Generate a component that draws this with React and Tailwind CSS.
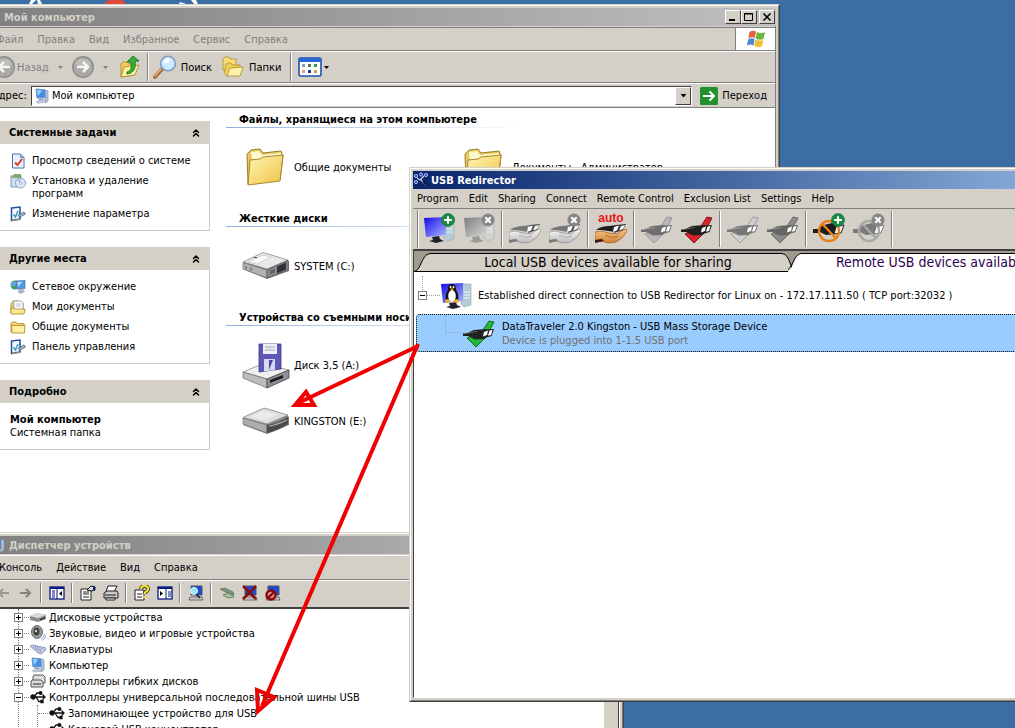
import React, { useState } from 'react';
import { ChevronsUp } from 'lucide-react';

const UI_FONT = 'font-["DejaVu_Sans_Condensed","Noto_Sans",sans-serif]';

/* ---------- small glyphs ---------- */

const Caret = ({ className = '' }) => (
  <svg viewBox="0 0 5 3" className={`w-[5px] h-[3px] shrink-0 ${className}`}>
    <path d="M0 0h5L2.5 3z" fill="currentColor" />
  </svg>
);

const NavCircle = ({ flip }) => (
  <svg viewBox="0 0 24 24" className="w-6 h-6 shrink-0">
    <circle cx="12" cy="12" r="11" fill="#8e8e8c" />
    <circle cx="12" cy="12" r="9.5" fill="#a9a9a6" />
    <path d="M4 9a9 9 0 0 1 16 0c-4 3-12 3-16 0z" fill="#bdbdba" />
    <path d={flip ? 'M18 12H7m5-5-5 5 5 5' : 'M6 12h11m-5-5 5 5-5 5'} fill="none" stroke="#f6f5f2" strokeWidth="2.6" />
  </svg>
);

const FolderShape = ({ className = 'w-4 h-4' }) => (
  <svg viewBox="0 0 16 16" className={`${className} shrink-0`}>
    <path d="M1 4.5 2 3h4l1.3 1.5H14V13H1z" fill="#f3d56b" stroke="#a8832a" strokeWidth=".8" />
    <path d="M1.500 6.500H15l-.5 7.500H2z" fill="#fdf0a0" stroke="#a8832a" strokeWidth=".8" />
  </svg>
);

const BigFolder = () => (
  <svg viewBox="0 0 48 48" className="w-12 h-12 shrink-0">
    <defs>
      <linearGradient id="bf" x1="0" y1="0" x2="1" y2="1">
        <stop offset="0" stopColor="#fff6b4" />
        <stop offset="1" stopColor="#efc246" />
      </linearGradient>
    </defs>
    <path d="M6 41 5 11l4-4 9-1 3 4 18-2 2 5-3 24z" fill="#e8c95c" stroke="#9c7b2c" />
    <path d="M9 9l8-1 3 4 19-2v3L10 17z" fill="#fff9cf" />
    <path d="M6 42 8 17l10-1 3-2 20-2-3 26z" fill="url(#bf)" stroke="#a9852e" />
  </svg>
);

const FolderUp = () => (
  <svg viewBox="0 0 24 24" className="w-6 h-6 shrink-0">
    <path d="M4 9l2-2h5l1 2h6v11L4 22z" fill="#f1cf57" stroke="#a8832a" strokeWidth=".8" />
    <path d="M4 22 7 12l15-2-4 10z" fill="#fdf09a" stroke="#a8832a" strokeWidth=".8" />
    <path d="M10 17c4-1 5-4 4-10h-4l6-6 6 5h-4c1 7-1 12-8 13z" fill="#36b336" stroke="#12711a" strokeWidth=".9" />
  </svg>
);

const SearchGlass = () => (
  <svg viewBox="0 0 24 24" className="w-6 h-6 shrink-0">
    <path d="M2 22 9 14" stroke="#a86a32" strokeWidth="4" strokeLinecap="round" />
    <path d="M2 21 8 14" stroke="#e6b583" strokeWidth="1.4" strokeLinecap="round" />
    <circle cx="15" cy="8.5" r="7.3" fill="#cfeaff" stroke="#7d9fc4" strokeWidth="1.6" />
    <path d="M10.500 8a5 5 0 0 1 7-4c-1 3-4 5-7 4z" fill="#fff" />
  </svg>
);

const FoldersIcon = () => (
  <svg viewBox="0 0 24 24" className="w-6 h-6 shrink-0">
    <path d="M2 4l2-2h4l1 2h6v10L2 15z" fill="#f7dc79" stroke="#b08a30" strokeWidth=".8" />
    <path d="M3 18 5 9l2-1h3l1 2h8v9L6 21z" fill="#f1cf57" stroke="#b08a30" strokeWidth=".8" />
    <path d="M6 21 9 13l13-1-3 9z" fill="#fdf3a8" stroke="#b08a30" strokeWidth=".8" />
  </svg>
);

const ViewsIcon = () => (
  <svg viewBox="0 0 24 20" className="w-6 h-5 shrink-0">
    <rect x="1" y="1" width="22" height="18" rx="1.500" fill="#fff" stroke="#1c4fb0" strokeWidth="1.600" />
    <rect x="1" y="1" width="22" height="4" fill="#2a67d2" />
    <rect x="4" y="7" width="3" height="3" fill="#8d9ab8" />
    <rect x="10" y="7" width="3" height="3" fill="#4d7a5d" />
    <rect x="16" y="7" width="3" height="3" fill="#3c9b3c" />
    <rect x="4" y="13" width="3" height="3" fill="#e49a76" />
    <rect x="10" y="13" width="3" height="3" fill="#123c98" />
    <rect x="16" y="13" width="3" height="3" fill="#c5a33a" />
  </svg>
);

const WindowsFlag = () => (
  <svg viewBox="0 0 20 18" className="w-5 h-[18px]">
    <path d="M3.500 2C6 .5 8 .6 10 1.700L8.800 8C7 7 5 7 2.400 8.300z" fill="#e8603a" />
    <path d="M10.800 2c2.400 1.300 5 1.300 8.200.2L17.500 9c-2.500 1-5.500.8-7.900-.6z" fill="#6db83c" />
    <path d="M2.200 9.200C4.500 8 6.600 8 8.600 9L7.400 15.500c-2-1.300-4.200-1.200-6.500-.1z" fill="#4a86da" />
    <path d="M9.400 9.400c2.600 1.300 5 1.400 7.900.6L16 16.500c-2.600 1-5.400.8-7.800-.7z" fill="#f5be33" />
  </svg>
);

const PcIcon = ({ className = 'w-4 h-4' }) => (
  <svg viewBox="0 0 16 16" className={`${className} shrink-0`}>
    <path d="M11 2l3 1v10l-3 2z" fill="#b9c4d6" stroke="#7685a0" strokeWidth=".6" />
    <path d="M2 1l9 .8v8L3 10z" fill="#3f8fee" stroke="#6d8fc0" strokeWidth=".9" />
    <path d="M3 2l5 .5L4 8z" fill="#9fd0ff" />
    <path d="M5 10.500h4l1 2H4z" fill="#8fa2bf" />
    <path d="M2 13.500l9-.8 1 1.500-8 1z" fill="#cfd8e6" stroke="#8793a8" strokeWidth=".5" />
  </svg>
);

const NetworkIcon = () => (
  <svg viewBox="0 0 16 16" className="w-4 h-4 shrink-0">
    <circle cx="5" cy="6" r="4.500" fill="#3f9e57" />
    <path d="M1 5c2-3 5-3 6-1S3 8 1 7z" fill="#64a8e8" />
    <path d="M6 2l9-.5v8L7 10z" fill="#4f97ea" stroke="#5877a8" strokeWidth=".8" />
    <path d="M7.500 3l5-.2L8 8z" fill="#b6dcff" />
    <path d="M9 10h4l2 3-5 2-2-2z" fill="#a8b6cc" />
  </svg>
);

const CheckDoc = () => (
  <svg viewBox="0 0 16 16" className="w-4 h-4 shrink-0">
    <path d="M2.500 1h8L14 4.500V15H2.500z" fill="#eaf1ff" stroke="#5570a8" />
    <path d="M10.500 1v3.500H14" fill="#9db5de" stroke="#5570a8" strokeWidth=".7" />
    <path d="M5 9.500 7.500 12 12 6" fill="none" stroke="#e03a20" strokeWidth="2" />
  </svg>
);

const InstallIcon = () => (
  <svg viewBox="0 0 16 16" className="w-4 h-4 shrink-0">
    <rect x="1" y="3" width="10" height="11" fill="#cfdcf0" stroke="#6f87b5" strokeWidth=".8" />
    <path d="M1 5l3-4h7v4z" fill="#7fae6a" />
    <circle cx="10.500" cy="10" r="5" fill="#dfe6f4" stroke="#7d8fb8" strokeWidth=".8" />
    <path d="M10.500 10 7 7a5 5 0 0 1 4-2z" fill="#a9c1ee" />
    <circle cx="10.500" cy="10" r="1.300" fill="#fff" stroke="#7d8fb8" strokeWidth=".6" />
  </svg>
);

const ControlIcon = () => (
  <svg viewBox="0 0 16 16" className="w-4 h-4 shrink-0">
    <path d="M1.500 2 10 1v12l-8.500 1.500z" fill="#f3f7ff" stroke="#24509c" strokeWidth="1.500" />
    <path d="M3.500 8.500 5.500 11 8 5" fill="none" stroke="#3a9cc4" strokeWidth="1.500" />
    <path d="M8 9.500 14 6l1.500 2L10 11z" fill="#a7b6c9" stroke="#3d4f6d" strokeWidth=".7" />
    <path d="M2 14.500l8-1" stroke="#c7a54a" />
  </svg>
);

const DocsFolder = () => (
  <svg viewBox="0 0 16 16" className="w-4 h-4 shrink-0">
    <path d="M1 5l2-3h5l5 2v10H1z" fill="#f2d269" stroke="#a8832a" strokeWidth=".8" />
    <path d="M4 2h7l2 2v7H4z" fill="#fff" stroke="#8296b8" strokeWidth=".8" />
    <path d="M6 5h5M6 7h5" stroke="#9db0cf" strokeWidth=".8" />
    <path d="M1 9h3l1 1h10l-1 5H1z" fill="#fbe78c" stroke="#a8832a" strokeWidth=".8" />
  </svg>
);

/* ---------- drives ---------- */

const HardDrive = () => (
  <svg viewBox="0 0 48 48" className="w-12 h-12 shrink-0">
    <path d="M1 21 21 11l26 8v10L25 37 1 27z" fill="#777" />
    <path d="M1 20 21 10.500 46 18 25 27z" fill="#e9e9e9" stroke="#8b8b8b" strokeWidth=".8" />
    <path d="M6 20 21 13l8 2-14 7z" fill="#f9f9f9" stroke="#bcbcbc" strokeWidth=".6" />
    <path d="M1 20.500 25 28v8L1 27z" fill="#b2b2b2" stroke="#6b6b6b" strokeWidth=".7" />
    <path d="M25 28l21-9.500V28L25 36z" fill="#8c8c8c" stroke="#555" strokeWidth=".7" />
    <path d="M35 24.500l9-4v7l-9 4z" fill="#2f3238" />
    <path d="M28 28.500l5-2v4l-5 2z" fill="#60646c" />
    <path d="M12 15.500h3M4 24v3M9 25.500v3" stroke="#555" />
  </svg>
);

const FloppyDrive = () => (
  <svg viewBox="0 0 48 48" className="w-12 h-12 shrink-0">
    <path d="M1 31 20 23l27 6-22 9z" fill="#f0f0f0" stroke="#888" strokeWidth=".8" />
    <path d="M1 31 25 38v9L1 37z" fill="#bcbcbc" stroke="#6b6b6b" strokeWidth=".7" />
    <path d="M25 38l22-9v8L25 47z" fill="#8f8f98" stroke="#444" strokeWidth=".8" />
    <path d="M28 39l13-5v3l-13 5z" fill="#1c1c22" />
    <path d="M17 3h22v25l-22 3z" fill="#5d58b8" stroke="#3b3788" strokeWidth=".8" />
    <path d="M21 3h14v10H21z" fill="#eceef8" />
    <path d="M23 6h10M23 9h10" stroke="#a3a6b8" />
    <path d="M22 18h11v11l-11 1.500z" fill="#d6d9ee" />
    <path d="M27 19h4l-4 10z" fill="#4a46a0" />
  </svg>
);

const RemovableDrive = () => (
  <svg viewBox="0 0 48 48" className="w-12 h-12 shrink-0">
    <path d="M1 21 22 11l23 7 2 2v8L25 37 1 28z" fill="#8a8a8a" />
    <path d="M1 20.500 22 11l24 7-21 9z" fill="#dedede" stroke="#8b8b8b" strokeWidth=".8" />
    <path d="M8 20 22 13.500 36 17.500 22 23z" fill="#ebebeb" />
    <path d="M1 21 25 28v8L1 27z" fill="#adadad" stroke="#777" strokeWidth=".7" />
    <path d="M25 28c8-1 15-4 21-8v7c-6 4-13 7-21 9z" fill="#4a4a4a" stroke="#555" strokeWidth=".7" />
    <path d="M27 29c7-1 12-3 18-6" stroke="#b5b5b5" strokeWidth="1.200" fill="none" />
  </svg>
);

/* ---------- USB Redirector toolbar drawings ---------- */

const Badge = ({ kind }) =>
  kind === 'plus' ? (
    <g>
      <circle cx="25" cy="7" r="6.500" fill="#1b8a45" stroke="#0e6a30" strokeWidth=".6" />
      <path d="M25 3.200v7.600M21.200 7h7.600" stroke="#fff" strokeWidth="2" />
    </g>
  ) : (
    <g>
      <circle cx="25" cy="7" r="6.500" fill="#868686" />
      <path d="m22.300 4.300 5.400 5.400M27.700 4.300l-5.400 5.400" stroke="#fff" strokeWidth="2" />
    </g>
  );

const Monitor = ({ gray, badge, tux }) => (
  <svg viewBox="0 0 32 32" className="w-8 h-8 shrink-0">
    <defs>
      <linearGradient id="scr" x1="0" y1="0" x2="1" y2="1">
        <stop offset="0" stopColor="#1208e8" />
        <stop offset="1" stopColor="#a9b6ff" />
      </linearGradient>
      <linearGradient id="scrGray" x1="0" y1="0" x2="1" y2="1">
        <stop offset="0" stopColor="#7c7c7c" />
        <stop offset="1" stopColor="#d6d6d6" />
      </linearGradient>
    </defs>
    <path d="M21 5h10v21l-7 2-3-3z" fill={gray ? '#d0d0d0' : '#b5cbd6'} stroke={gray ? '#b0b0b0' : '#90a8b2'} strokeWidth=".6" />
    <path d="M24 16h6M24 19h6M24 13h6" stroke={gray ? '#eee' : '#e6f5f8'} />
    <path d="M1 5l22-1v18L3 24z" fill={gray ? 'url(#scrGray)' : 'url(#scr)'} />
    <path d="M9 24l7-1 1 3 4 2-8 2-7-2 4-1z" fill={gray ? '#9a9a9a' : '#20242a'} />
    {tux && (
      <g>
        <path d="M12 5c4 0 4 4 4 6 2 3 3 6 2 11H6c-1-5 0-8 2-11 0-3 0-6 4-6z" fill="#111" />
        <ellipse cx="12" cy="17" rx="3.800" ry="6" fill="#fff" />
        <circle cx="10.500" cy="8" r="1" fill="#fff" />
        <circle cx="13.500" cy="8" r="1" fill="#fff" />
        <path d="M10 9.500h4l-2 2.500z" fill="#f0a818" />
        <path d="M5 21l3-1 3 3-5 1zM19 21l-3-1-3 3 5 1z" fill="#f2b01e" />
      </g>
    )}
    {badge && <Badge kind={badge} />}
  </svg>
);

const Hand = ({ warm, auto, badge }) => (
  <svg viewBox="0 0 32 32" className="w-8 h-8 shrink-0">
    <defs>
      <linearGradient id="skin" x1="0" y1="0" x2="0" y2="1">
        <stop offset="0" stopColor="#fbc888" />
        <stop offset="1" stopColor="#d07f35" />
      </linearGradient>
      <linearGradient id="skinGray" x1="0" y1="0" x2="0" y2="1">
        <stop offset="0" stopColor="#fafafa" />
        <stop offset="1" stopColor="#b8b8b8" />
      </linearGradient>
    </defs>
    <path d="M0 19l7-1 6 2 9 1 4-3 5-2 1 2-5 7-6 4-8 1-6-2-7 1z" fill={warm ? 'url(#skin)' : 'url(#skinGray)'} stroke={warm ? '#98561c' : '#8c8c8c'} strokeWidth=".7" />
    <path d="M0 27l7-1 2 2-9 2z" fill={warm ? '#3a1c08' : '#777'} />
    <path d="M10 22l7 2.500 6-1.500" stroke={warm ? '#a85e20' : '#a0a0a0'} fill="none" strokeWidth=".8" />
    <path d="M1 17c4-3 8-4 13-4l8-1-2 7-7-1-6-1z" fill={warm ? '#1d1d1d' : '#777'} />
    <path d="M21 12l10-1-3 6-9 3z" fill={warm ? '#303030' : '#4c4c4c'} />
    <path d="M19 14l5-1.500-2 5-4 1.500z" fill="#fff" />
    <path d="M26 13l4-1-2 4-4 1.500z" fill="#fff" />
    {auto && (
      <text x="16" y="9" textAnchor="middle" fontSize="12" fontWeight="bold" fill="#e81414" fontFamily="Liberation Sans, sans-serif">auto</text>
    )}
    {badge && <Badge kind={badge} />}
  </svg>
);

const PlugCheck = ({ check, edge, plug }) => (
  <svg viewBox="0 0 32 32" className="w-8 h-8 shrink-0">
    <path d="M4 21l5-2 5 3L26 4l5 1-8 15-10 10z" fill={check} stroke={edge} />
    <path d="M0 16.500h3l8-3.500 12-1 3 2-4 8-10 .5-7-3.500H0z" fill={plug} />
    <path d="M22 12.500l9-.5-2.500 7-8 2.500z" fill={plug} />
    <path d="M21 15l4-1.500-1 4.500-4 1.500z" fill="#fff" />
    <path d="M26.500 13.500l3-.5-1.500 5-3 .8z" fill="#fff" />
    <path d="M5 16l9-1.500" stroke="#fff" strokeOpacity=".3" />
  </svg>
);

const PlugBan = ({ gray, badge }) => (
  <svg viewBox="0 0 32 32" className="w-8 h-8 shrink-0">
    <path d="M0 16h6v4H0zM7 13l12-3 4 2v9l-10 1-6-3z" fill={gray ? '#7a7a7a' : '#1c1c1c'} />
    <path d="M23 14l8-2-3 8-7 1z" fill="#fff" stroke={gray ? '#777' : '#222'} />
    <circle cx="16" cy="18" r="10" fill="none" stroke={gray ? '#a8a8a8' : '#e8811a'} strokeWidth="2.400" />
    <path d="M9 10.500l14 15" stroke={gray ? '#a8a8a8' : '#e8811a'} strokeWidth="2.400" />
    <Badge kind={badge} />
  </svg>
);

/* ---------- shared window parts ---------- */

const WindowFrame = ({ className, children, label }) => (
  <section aria-label={label} className={`absolute flex flex-col bg-[#d4d0c8] border border-t-[#d4d0c8] border-l-[#d4d0c8] border-r-[#404040] border-b-[#404040] ${className}`}>
    <div className="flex flex-col flex-1 min-h-0 border border-t-white border-l-white border-r-[#808080] border-b-[#808080] p-[2px]">
      {children}
    </div>
  </section>
);

const MenuBar = ({ items, className = '' }) => (
  <nav className={`flex items-center ${className}`}>
    {items.map((item) => (
      <button key={item} className="px-[7px] whitespace-nowrap">{item}</button>
    ))}
  </nav>
);

const Separator = ({ className = '' }) => (
  <div className={`shrink-0 w-[2px] border-l border-l-[#808080] border-r border-r-white ${className}`} />
);

const CaptionButton = ({ label, children }) => (
  <button aria-label={label} className="w-4 h-[14px] flex items-center justify-center bg-[#d4d0c8] border border-t-white border-l-white border-r-[#404040] border-b-[#404040]">
    <svg viewBox="0 0 12 10" className="w-3 h-[10px]" fill="none" stroke="#000">{children}</svg>
  </button>
);

/* ---------- Explorer ---------- */

const TaskPanel = ({ title, children }) => (
  <section>
    <button className="w-full h-[23px] pl-[17px] pr-2 flex items-center justify-between bg-[#d4d0c8] font-bold">
      {title}
      <ChevronsUp className="w-3 h-3" strokeWidth={3} />
    </button>
    <div className="border border-t-0 border-[#cdcac3] pt-[10px] pb-[10px] pl-[17px] pr-3">{children}</div>
  </section>
);

const TaskLinks = ({ items }) => (
  <ul className="space-y-[7px]">
    {items.map(({ name, icon }) => (
      <li key={name}>
        <a href="#" className="flex items-start gap-[6px]">
          <span className="h-[13px] flex items-center">{icon}</span>
          <span className="min-w-0 grow">{name}</span>
        </a>
      </li>
    ))}
  </ul>
);

const systemTasks = [
  { name: 'Просмотр сведений о системе', icon: <CheckDoc /> },
  { name: 'Установка и удаление программ', icon: <InstallIcon /> },
  { name: 'Изменение параметра', icon: <ControlIcon /> },
];

const otherPlaces = [
  { name: 'Сетевое окружение', icon: <NetworkIcon /> },
  { name: 'Мои документы', icon: <DocsFolder /> },
  { name: 'Общие документы', icon: <FolderShape /> },
  { name: 'Панель управления', icon: <ControlIcon /> },
];

const fileGroups = [
  {
    title: 'Файлы, хранящиеся на этом компьютере',
    items: [
      { name: 'Общие документы', icon: <BigFolder /> },
      { name: 'Документы - Администратор', icon: <BigFolder /> },
    ],
  },
  { title: 'Жесткие диски', items: [{ name: 'SYSTEM (C:)', icon: <HardDrive /> }] },
  {
    title: 'Устройства со съемными носителями',
    stacked: true,
    items: [
      { name: 'Диск 3,5 (A:)', icon: <FloppyDrive /> },
      { name: 'KINGSTON (E:)', icon: <RemovableDrive /> },
    ],
  },
];

const ExplorerWindow = () => {
  const [address, setAddress] = useState('Мой компьютер');

  return (
    <WindowFrame label="Мой компьютер" className="top-1 -left-3 w-[792px] h-[540px]">
      <header className="h-[18px] shrink-0 flex items-center pl-3 pr-px bg-linear-to-r from-[#808080] to-[#c0c0c0] text-[#d4d0c8] font-bold">
        <span className="grow">Мой компьютер</span>
        <CaptionButton label="Свернуть"><path d="M2 8h6" strokeWidth="2" /></CaptionButton>
        <CaptionButton label="Развернуть"><path d="M1.500 1.500h8v7h-8zM1 2h9" /></CaptionButton>
        <span className="w-[2px]" />
        <CaptionButton label="Закрыть"><path d="M2.500 1.500l7 7M9.500 1.500l-7 7" strokeWidth="1.600" /></CaptionButton>
      </header>

      <div className="grow min-h-0 flex flex-col border-r border-r-[#808080]">
        <div className="mt-px h-6 shrink-0 flex border-t border-t-[#808080] border-b border-b-[#808080]">
          <MenuBar items={['Файл', 'Правка', 'Вид', 'Избранное', 'Сервис', 'Справка']} className="grow -ml-[3px] text-[#808080]" />
          <div className="w-10 flex items-center justify-center bg-white border-l border-l-[#808080]">
            <WindowsFlag />
          </div>
        </div>

        {/* Standard buttons */}
        <div className="h-8 shrink-0 flex items-center border-t border-t-white border-b border-b-[#808080]">
          <button className="flex items-center text-[#808080]"><NavCircle flip /><span className="ml-px">Назад</span></button>
          <Caret className="ml-[9px] text-[#808080]" />
          <button aria-label="Вперед" className="ml-2"><NavCircle /></button>
          <Caret className="ml-2 text-[#808080]" />
          <button aria-label="Вверх" className="ml-[9px]"><FolderUp /></button>
          <Separator className="h-7 ml-[6px]" />
          <button className="ml-1 flex items-center gap-1"><SearchGlass />Поиск</button>
          <button className="ml-[9px] flex items-center gap-1"><FoldersIcon />Папки</button>
          <Separator className="h-7 ml-[9px]" />
          <button aria-label="Вид" className="ml-[6px] flex items-center gap-[2px]"><ViewsIcon /><Caret /></button>
        </div>

        {/* Address bar */}
        <div className="h-6 shrink-0 flex items-center gap-1 border-t border-t-white">
          <label htmlFor="address" className="w-8 text-right">Адрес:</label>
          <div className="ml-[3px] h-5 grow flex items-center bg-white border border-t-[#404040] border-l-[#404040] border-r-white border-b-white pl-[2px]">
            <PcIcon />
            <input id="address" value={address} onChange={(e) => setAddress(e.target.value)} className="grow min-w-0 px-[2px] outline-none" />
            <button aria-label="Список адресов" className="w-4 h-[18px] flex items-center justify-center bg-[#d4d0c8] border border-t-white border-l-white border-r-[#404040] border-b-[#404040]">
              <Caret className="scale-125" />
            </button>
          </div>
          <button className="ml-1 pr-2 flex items-center gap-1">
            <svg viewBox="0 0 18 18" className="w-[18px] h-[18px]">
              <rect width="18" height="18" rx="1.500" fill="#22902c" />
              <path d="M3 9h11M9.500 4.500 14 9l-4.500 4.500" fill="none" stroke="#fff" strokeWidth="2" />
            </svg>
            Переход
          </button>
        </div>

        <div className="grow flex bg-white border-t border-t-[#808080] overflow-hidden">
          <aside className="w-[218px] shrink-0 pt-[13px] space-y-4">
            <TaskPanel title="Системные задачи"><TaskLinks items={systemTasks} /></TaskPanel>
            <TaskPanel title="Другие места"><TaskLinks items={otherPlaces} /></TaskPanel>
            <TaskPanel title="Подробно">
              <p className="font-bold">Мой компьютер</p>
              <p>Системная папка</p>
            </TaskPanel>
          </aside>

          <main className="ml-4 pt-[5px] grow">
            {fileGroups.map((group) => (
              <section key={group.title} className="pb-[21px]">
                <h2 className="h-[15px] pl-[13px] font-bold whitespace-nowrap">{group.title}</h2>
                <div className="-mt-px h-px w-[300px] bg-linear-to-r from-[#8fb0dc] to-white" />
                <div className={group.stacked ? 'pt-[15px] pl-4 flex flex-col gap-2' : 'pt-[15px] pl-4 flex'}>
                  {group.items.map((item) => (
                    <button key={item.name} className="w-[218px] shrink-0 flex items-center gap-1 whitespace-nowrap">
                      {item.icon}
                      {item.name}
                    </button>
                  ))}
                </div>
              </section>
            ))}
          </main>
        </div>
      </div>
    </WindowFrame>
  );
};

/* ---------- Device manager ---------- */

const UsbTrident = () => (
  <svg viewBox="0 0 16 16" className="w-4 h-4 shrink-0" fill="none" stroke="#111" strokeWidth="1.300">
    <path d="M1 8h14M12.500 5.500 15 8l-2.500 2.500M4 8l3-4h3M6 8l3 4.500h3" />
    <circle cx="3" cy="8" r="2" fill="#111" />
    <circle cx="10.500" cy="4" r="1.300" fill="#111" />
    <path d="M11 11.500h2v2h-2z" fill="#111" />
  </svg>
);

const DiskSmall = () => (
  <svg viewBox="0 0 16 16" className="w-4 h-4 shrink-0">
    <path d="M0 7l7-3 9 2v4l-8 3-8-2z" fill="#8b8b8b" />
    <path d="M0 7l7-3 9 2-8 3z" fill="#dcdcdc" />
    <path d="M10 10l5-2v1.500l-5 2z" fill="#333" />
  </svg>
);

const SpeakerSmall = () => (
  <svg viewBox="0 0 16 16" className="w-4 h-4 shrink-0">
    <ellipse cx="7" cy="7" rx="5.500" ry="6.500" fill="#9a9a9a" stroke="#555" strokeWidth=".8" />
    <ellipse cx="6.500" cy="6.500" rx="3" ry="4" fill="#3f3f3f" />
    <circle cx="6" cy="6" r="1.200" fill="#d5d5d5" />
    <path d="M11 14c2-1 3.500-3 3.500-5M12 15.500c2-1 3.500-3 3.500-5" stroke="#6f8fd8" strokeWidth=".8" fill="none" />
  </svg>
);

const KeyboardSmall = () => (
  <svg viewBox="0 0 16 16" className="w-4 h-4 shrink-0">
    <path d="M0 5l3-1 13 3v2l-5 4-3-1z" fill="#c9cfe8" stroke="#7d86b0" strokeWidth=".8" />
    <path d="M3 6l9 4M5 5.500l9 3M5 8l6 3" stroke="#7580b8" strokeDasharray="1 1" />
  </svg>
);

const FloppyCtl = () => (
  <svg viewBox="0 0 16 16" className="w-4 h-4 shrink-0" fill="#dcdcdc" stroke="#444" strokeWidth=".9">
    <path d="M4 2h9l2 2v6H3V4z" />
    <path d="M2 7h9l2 2v5H1V9z" />
    <path d="M3 11h8" stroke="#111" />
  </svg>
);

const deviceTree = [
  { name: 'Дисковые устройства', icon: <DiskSmall /> },
  { name: 'Звуковые, видео и игровые устройства', icon: <SpeakerSmall /> },
  { name: 'Клавиатуры', icon: <KeyboardSmall /> },
  { name: 'Компьютер', icon: <PcIcon /> },
  { name: 'Контроллеры гибких дисков', icon: <FloppyCtl /> },
  {
    name: 'Контроллеры универсальной последовательной шины USB',
    icon: <UsbTrident />,
    children: ['Запоминающее устройство для USB', 'Корневой USB концентратор'],
  },
];

const Expander = ({ open }) => (
  <button aria-label={open ? 'Свернуть ветвь' : 'Развернуть ветвь'} className="relative shrink-0 bg-white">
    <svg viewBox="0 0 9 9" className="w-[9px] h-[9px]" fill="none" shapeRendering="crispEdges">
      <rect x=".5" y=".5" width="8" height="8" stroke="#808080" />
      <path d={open ? 'M2 4.500h5' : 'M2 4.500h5M4.500 2v5'} stroke="#000" />
    </svg>
  </button>
);

const ToolGlyph = ({ children }) => (
  <svg viewBox="0 0 16 16" className="w-4 h-4" fill="none">{children}</svg>
);

const paneGlyph = (
  <>
    <rect x="1" y="2" width="14" height="12" fill="#fff" stroke="#0a1a80" strokeWidth="1.300" />
    <path d="M1 3h14" stroke="#0a1a80" strokeWidth="2" />
  </>
);

const monitorGlyph = (
  <>
    <path d="M3 1h11v9H3z" fill="#1a48d8" stroke="#555" />
    <path d="M2 12h12l1 3H1z" fill="#c8c8c8" stroke="#555" strokeWidth=".8" />
  </>
);

const dmTools = [
  [
    { label: 'Назад', art: <path d="M14 8H4m4-4L4 8l4 4" stroke="#9a9790" strokeWidth="2" /> },
    { label: 'Вперед', art: <path d="M2 8h10M8 4l4 4-4 4" stroke="#85827c" strokeWidth="2" /> },
  ],
  [{ label: 'Дерево консоли', art: <>{paneGlyph}<path d="M3 6h3M3 8h3M3 10h3M3 12h3" stroke="#0a1a80" /><path d="M8 3v11" stroke="#0a1a80" /><path d="M13 6v5l-3-2.500z" fill="#000" /></> }],
  [
    { label: 'Свойства', art: <><path d="M1 4h10v11H1z" fill="#fff" stroke="#222" /><path d="M3 7h6M3 9h6M3 12h6" stroke="#222" /><path d="M7 5l4-4 4 1v3l-4 1z" fill="#ddd" stroke="#111" /><path d="M14 1v4" stroke="#0a1a80" strokeWidth="2" /></> },
    { label: 'Печать', art: <><path d="M5 1h9l-3 6H3z" fill="#fff" stroke="#222" /><path d="M1 8l3-2h10l1 2v5H1z" fill="#c9c9c9" stroke="#222" /><path d="M2 10h11M3 13h9v2H3z" stroke="#222" fill="#fff" /></> },
  ],
  [
    { label: 'Справка', art: <><path d="M1 5h9v10H1z" fill="#fff" stroke="#222" /><path d="M3 9h5M3 12h5" stroke="#222" /><path d="M7 4c0-4 7-4 7 0 0 3-3.500 2-3.500 5" stroke="#222" strokeWidth="3.800" /><path d="M7 4c0-4 7-4 7 0 0 3-3.500 2-3.500 5M10.500 11v2" stroke="#f4e72a" strokeWidth="2.200" /></> },
    { label: 'Панель действий', art: <>{paneGlyph}<path d="M9 3v11" stroke="#0a1a80" /><path d="M11 7h3M11 9h3M11 11h3" stroke="#0a1a80" /><path d="M3 6v5l3-2.500z" fill="#000" /></> },
  ],
  [{ label: 'Обновить конфигурацию', art: <>{monitorGlyph}<circle cx="6" cy="6" r="3.500" fill="#9fe4f4" stroke="#dff" /><path d="M8 9l4 4" stroke="#123" strokeWidth="1.600" /></> }],
  [
    { label: 'Обновить драйвер', art: <><path d="M1 4l5-1 8 4 1 3-5-1z" fill="#7c9a78" stroke="#4c6a48" strokeWidth=".7" /><path d="M4 10l6-2 5 4-6 1z" fill="#a8c49f" stroke="#4c6a48" strokeWidth=".7" /></> },
    { label: 'Удалить', art: <>{monitorGlyph}<path d="M1 1l13 13M14 1L1 14" stroke="#8a0a0a" strokeWidth="2.500" /></> },
    { label: 'Отключить', art: <>{monitorGlyph}<circle cx="6" cy="10" r="4.500" fill="#d89090" stroke="#8a0a0a" strokeWidth="2.400" /><path d="M3 13l6-6" stroke="#8a0a0a" strokeWidth="2.400" /></> },
  ],
];

const DeviceManagerWindow = () => (
  <WindowFrame label="Диспетчер устройств" className="top-[532px] -left-[14px] w-[638px] h-[260px]">
    <header className="h-[18px] shrink-0 flex items-center gap-[3px] bg-linear-to-r from-[#808080] to-[#c0c0c0] text-[#d4d0c8] font-bold">
      <PcIcon />
      Диспетчер устройств
    </header>
    <MenuBar items={['Консоль', 'Действие', 'Вид', 'Справка']} className="mt-px h-[25px] shrink-0 pl-[2px] border-t border-t-white border-b border-b-[#808080]" />
    <div className="h-[27px] shrink-0 pb-[3px] pl-px flex items-center border-t border-t-white">
      {dmTools.map((group, i) => (
        <React.Fragment key={i}>
          {i > 0 && <Separator className="h-5 mx-[3px]" />}
          {group.map((tool) => (
            <button key={tool.label} aria-label={tool.label} className="w-[23px] h-[22px] flex items-center justify-center">
              <ToolGlyph>{tool.art}</ToolGlyph>
            </button>
          ))}
        </React.Fragment>
      ))}
    </div>
    <div className="grow min-h-0 flex border border-t-2 border-t-[#404040] border-l-[#404040] border-r-white border-b-white bg-white">
      <ul className="relative grow pl-[23px] whitespace-nowrap overflow-hidden">
        <span className="absolute left-[27px] top-0 h-full border-l border-dotted border-[#808080]" />
        {deviceTree.map((node) => (
          <li key={node.name} className="relative">
            <div className="h-4 flex items-center">
              <Expander open={!!node.children} />
              <span className="w-[5px] mx-px border-t border-dotted border-[#808080]" />
              {node.icon}
              <span className="ml-[3px]">{node.name}</span>
            </div>
            {node.children && (
              <ul className="ml-[23px] border-l border-dotted border-[#808080]">
                {node.children.map((child) => (
                  <li key={child} className="h-4 flex items-center">
                    <span className="w-[10px] mr-px border-t border-dotted border-[#808080]" />
                    <UsbTrident />
                    <span className="ml-[3px]">{child}</span>
                  </li>
                ))}
              </ul>
            )}
          </li>
        ))}
      </ul>
      <div className="w-4 shrink-0 bg-[#d4d0c8] border border-t-white border-l-white border-r-[#404040] border-b-[#404040]" />
    </div>
  </WindowFrame>
);

/* ---------- USB Redirector ---------- */

const usbTools = [
  [
    { label: 'Connect to server', icon: <Monitor badge="plus" /> },
    { label: 'Disconnect', icon: <Monitor gray badge="x" /> },
  ],
  [
    { label: 'Share device', icon: <Hand /> },
    { label: 'Unshare device', icon: <Hand badge="x" /> },
  ],
  [{ label: 'Auto share', icon: <Hand warm auto /> }],
  [
    { label: 'Connect device', icon: <PlugCheck check="#b9b9b9" edge="#969696" plug="#6e6e6e" /> },
    { label: 'Disconnect device', icon: <PlugCheck check="#d8232c" edge="#8a1018" plug="#1f1f1f" /> },
  ],
  [
    { label: 'Auto-connect device', icon: <PlugCheck check="#cfcfcf" edge="#9c9c9c" plug="#777777" /> },
    { label: 'Auto-connect all', icon: <PlugCheck check="#8a8a8a" edge="#6e6e6e" plug="#666666" /> },
  ],
  [
    { label: 'Add exclusion', icon: <PlugBan badge="plus" /> },
    { label: 'Remove exclusion', icon: <PlugBan gray badge="x" /> },
  ],
];

const UsbRedirectorWindow = () => {
  const [tab, setTab] = useState('remote');

  return (
    <WindowFrame label="USB Redirector" className="top-[167px] left-[409px] -right-[154px] h-[535px]">
      <header className="h-[18px] shrink-0 flex items-center gap-[2px] bg-linear-to-r from-[#0a246a] to-[#a6caf0] text-white font-bold">
        <svg viewBox="0 0 16 16" className="w-4 h-4" fill="none">
          <g fill="#2c50c8" stroke="#a9bdf5">
            <circle cx="3" cy="4" r="1.600" /><circle cx="8" cy="2.500" r="1.600" /><circle cx="13" cy="3" r="1.600" />
            <circle cx="3" cy="10" r="1.600" />
          </g>
          <path d="M4 6l3 2 4-4M8 8l6 6" stroke="#c9d4f8" strokeWidth="1.200" />
          <path d="M10 9l4 5" stroke="#111" strokeWidth="1.500" />
        </svg>
        USB Redirector
      </header>
      <div className="h-[19px] shrink-0 flex">
        {['Program', 'Edit', 'Sharing', 'Connect', 'Remote Control', 'Exclusion List', 'Settings', 'Help'].map((item) => (
          <button key={item} className="pl-1 pr-[6px] whitespace-nowrap">{item}</button>
        ))}
      </div>

      <div className="h-[41px] shrink-0 flex items-center pl-1 border-t border-t-[#808080]">
        <Separator className="h-[38px]" />
        {usbTools.map((group, i) => (
          <React.Fragment key={i}>
            {group.map((tool) => (
              <button key={tool.label} aria-label={tool.label} className="w-10 h-9 flex items-center justify-center">{tool.icon}</button>
            ))}
            <Separator className="h-9 mx-[2px]" />
          </React.Fragment>
        ))}
      </div>

      <div className="grow min-h-0 flex flex-col bg-white border border-t-2 border-t-[#404040] border-l-[#404040] border-r-white border-b-white">
        <div role="tablist" className="shrink-0 h-[21px] pt-px flex bg-[#a09a8f] text-[14px]">
          <button role="tab" aria-selected={tab === 'local'} onClick={() => setTab('local')} className="relative w-[374px] h-5">
            <svg viewBox="0 0 384 20" className="absolute left-0 top-0 w-[384px] h-5">
              <path d="M0 19.500c7 0 7-17 16-18h352c9 1 7 17 15 18z" fill="#d4d0c8" stroke="#000" />
            </svg>
            <span className="relative pl-[14px]">Local USB devices available for sharing</span>
          </button>
          <button role="tab" aria-selected={tab === 'remote'} onClick={() => setTab('remote')} className="relative grow h-5 pl-12 text-left text-[#2a0050] whitespace-nowrap">
            <svg viewBox="0 0 400 20" preserveAspectRatio="xMinYMin slice" className="absolute left-0 top-0 w-full h-5">
              <path d="M0 19.500c6-3 6-17 13-18h387V21H0z" fill="#fff" />
              <path d="M-4 19.500c9-1 9-17 17-18h390" fill="none" stroke="#000" />
            </svg>
            <span className="relative">Remote USB devices available</span>
          </button>
        </div>

        <div className="flex flex-col pl-[2px]">
          <div className="h-[42px] pt-1 flex items-center pl-[2px] relative">
            <span className="absolute left-[6px] top-1 h-4 border-l border-dotted border-[#a0a0a0]" />
            <Expander open />
            <span className="w-[13px] border-t border-dotted border-[#a0a0a0]" />
            <Monitor tux />
            <span className="ml-[6px] whitespace-nowrap">Established direct connection to USB Redirector for Linux on - 172.17.111.50 ( TCP port:32032 )</span>
          </div>
          <div className="h-[38px] flex items-center pl-7 bg-[#99ccff] border border-dotted border-black rounded-sm">
            <span className="w-[18px] h-[18px] -mt-[18px] border-l border-b border-dotted border-[#8ea8c8]" />
            <PlugCheck check="#22b83a" edge="#0e6e20" plug="#222222" />
            <div className="ml-[7px] pt-px leading-[14px] whitespace-nowrap">
              <p>DataTraveler 2.0 Kingston - USB Mass Storage Device</p>
              <p className="text-[#707070]">Device is plugged into 1-1.5 USB port</p>
            </div>
          </div>
        </div>
      </div>
    </WindowFrame>
  );
};

const App = () => {
  return (
    <div className={`relative h-screen overflow-hidden bg-[#3a6ea5] text-black text-[11px] leading-[13px] ${UI_FONT}`}>
      {/* Bottom edges of the desktop icons */}
      <svg viewBox="0 0 240 5" className="absolute left-0 top-0 w-60 h-[5px]">
        <path d="M31 0h5l-4 4h-3zM37 0h3l2 4h-4zM180 2l6 2h-7zM191 0h5l2 4h-4z" fill="#fff" />
        <path d="M107 1c5-2 12-2 17 0l2 3h-22z" fill="#e2483c" />
      </svg>

      <ExplorerWindow />
      <DeviceManagerWindow />
      <UsbRedirectorWindow />

      {/* Hand-drawn marker arrows */}
      <svg viewBox="0 0 430 728" className="absolute left-0 top-0 w-[430px] h-[728px] pointer-events-none" fill="none" stroke="#f00000" strokeWidth="4">
        <path d="M418 346 296 404" />
        <path d="M295 405l11-13 8 13z" />
        <path d="M418 344 262 706" />
        <path d="M257 690l17 7-16 14z" />
      </svg>
    </div>
  );
};

export default App;
